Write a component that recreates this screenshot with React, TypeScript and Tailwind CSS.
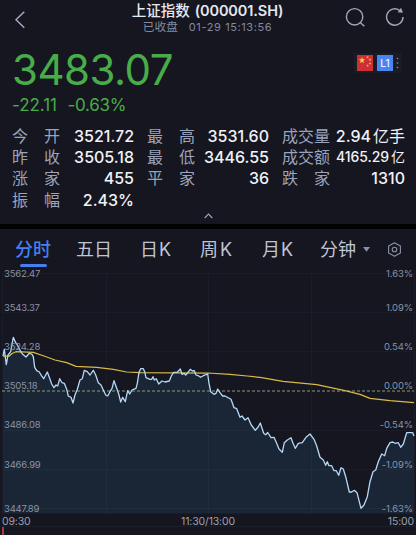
import React from "react";

type Point = [number, number];

// Intraday price, in chart coordinates (x, y from the top of the page section).
const price: Point[] = [
  [3, 356], [4.3, 349.3], [6.3, 364.7], [8, 355], [10.7, 351.7], [13.3, 337.3], [15.7, 342.7], [18, 346],
  [20.7, 351.7], [22.7, 354.3], [26, 357], [29.3, 353.3], [31.7, 354], [33.3, 356.7], [34.7, 367.3],
  [36.7, 370.7], [39.3, 372], [41.3, 375.3], [43.7, 378.7], [47.3, 372], [49.3, 377.3], [51.7, 384],
  [54, 387.7], [56, 385], [57.7, 386], [59.7, 378.7], [62, 382.7], [64.3, 383.3], [66.7, 389.3],
  [68.3, 396], [71, 397.3], [73, 403], [75, 395], [77.3, 389.3], [80, 380], [82.3, 378.7], [84.3, 370.3],
  [87.3, 371.7], [90, 375], [93.3, 370.3], [95.7, 375], [98.3, 382.7], [101, 385], [103.3, 390],
  [105.7, 395], [107.7, 396], [110, 391.7], [112, 388.3], [114, 380.7], [116.7, 388.3], [118.7, 394],
  [120.7, 402], [122.7, 397.3], [125.3, 401.7], [127.7, 390.7], [129.7, 394], [132, 390], [136, 388.3],
  [137.3, 383.3], [139, 372.3], [140.7, 368.7], [143.3, 368.7], [144.7, 371.7], [146, 377.7],
  [150, 379.3], [151.7, 379.3], [153, 376.7], [154.3, 380], [156.3, 378.7], [158.7, 384], [162, 381],
  [165, 382], [169.3, 381], [171.3, 376], [173.7, 372.3], [177.3, 372.3], [180.3, 369], [182, 374.3],
  [184, 373.3], [185.7, 375], [187.7, 372.7], [190.3, 369.3], [192.3, 371], [194.3, 370.7], [196, 375],
  [198.3, 375.7], [200.7, 377.3], [203.3, 375.7], [207.7, 374], [209, 383.3], [210.7, 391.7],
  [214, 394.3], [216, 393.3], [217.7, 389], [220, 392.7], [222.7, 396], [225, 396], [231, 399.3],
  [234, 407.7], [236.7, 408.7], [240, 417.3], [242, 416], [245, 420], [248, 417.7], [251.3, 425],
  [255.3, 430.3], [258, 427.3], [260.3, 423], [263.7, 433.3], [265.7, 434.7], [267.7, 432.5],
  [271, 437.7], [274, 437.3], [276.7, 443.3], [279, 449], [282.3, 452.3], [284.3, 442.7], [287.3, 440],
  [291, 437.7], [293, 443.3], [295.3, 448.3], [298.3, 443.3], [302.3, 442.7], [306, 437.3], [310, 434],
  [314, 439.3], [316.7, 446], [320, 457.3], [323.3, 460], [325.7, 465.3], [327.3, 461.7], [329, 465.7],
  [331.7, 465.7], [334, 470.7], [336.3, 470.7], [338.7, 475.3], [341, 467.7], [343.3, 469], [345.7, 476.7],
  [349.3, 492], [351.7, 492], [354.3, 490.3], [357, 492.7], [361, 508.3], [364, 505], [367.3, 496.7],
  [370, 481.7], [373, 471.7], [375.7, 470], [378.3, 461.7], [381.7, 454], [384.7, 455.7], [386.7, 448.3],
  [390, 442.7], [392.7, 442], [395, 443.3], [398.3, 442.7], [400.7, 447.3], [403.3, 444], [406.7, 432.7],
  [412.7, 432.7], [414, 436],
];

// Running average price.
const average: Point[] = [
  [3, 356], [9.3, 356], [12, 353.5], [16, 351.7], [33.3, 352.3], [44, 356], [55, 360], [66.7, 362.7], [76, 366.3],
  [96.7, 367.3], [113.3, 369.3], [126.7, 372], [140, 372.7], [208, 373], [230, 374.3], [247, 376],
  [260, 377.4], [283, 381.3], [316.7, 384.7], [345, 390.7], [360, 394.3], [370, 398.3], [390, 400.7],
  [414, 402.7],
];

const toPoints = (pts: Point[]) => pts.map((p) => p.join(",")).join(" ");

const levels = [
  { top: "top-0", price: "3562.47", pct: "1.63%" },
  { top: "top-[34px]", price: "3543.37", pct: "1.09%" },
  { top: "top-[73px]", price: "3524.28", pct: "0.54%" },
  { top: "top-[112px]", price: "3505.18", pct: "0.00%" },
  { top: "top-[151px]", price: "3486.08", pct: "-0.54%" },
  { top: "top-[191px]", price: "3466.99", pct: "-1.09%" },
  { top: "top-[235px]", price: "3447.89", pct: "-1.63%" },
];

function Stat({ label, value, unit, small }: { label: string; value: string; unit?: string; small?: boolean }) {
  return (
    <div className="flex h-[21.3px] items-center justify-between whitespace-nowrap">
      <span className="flex w-12 shrink-0 justify-between text-[16px] text-[#9ca3bb]">
        {label.split("").map((c) => (
          <span key={c}>{c}</span>
        ))}
      </span>
      <span
        className={
          small
            ? "text-[14px] font-medium tracking-[-0.05px] text-[#f1f2f6]"
            : "text-[16px] font-medium text-[#f1f2f6]"
        }
      >
        {value}
        {unit && <span className="ml-[2px] font-normal">{unit}</span>}
      </span>
    </div>
  );
}

function Header() {
  return (
    <header className="flex h-[39px] justify-between">
      <svg className="mt-[10px] ml-[14px] h-5 w-14" viewBox="0 0 56 20" fill="none" stroke="#a5adc2" strokeWidth="1.4">
        <path d="M10.3 1.7 2 9.7l8.3 8" />
      </svg>
      <div className="flex w-[180px] flex-col items-center whitespace-nowrap">
        <h1 className="mt-[1px] flex h-5 items-center gap-[5px] text-[14.5px] font-medium text-[#e6e8ef]">
          <span>上证指数</span>
          <span className="font-semibold tracking-[-0.1px]">(000001.SH)</span>
        </h1>
        <p className="flex h-[13px] items-center gap-[11px] text-[11.7px] text-[#8289a0]">
          <span>已收盘</span>
          <span className="text-[11px] tracking-[0.6px]">01-29 15:13:56</span>
        </p>
      </div>
      <div className="mt-[7px] mr-[11px] flex w-[60px] justify-between">
        <svg className="h-5 w-5" viewBox="0 0 20 20" fill="none" stroke="#a0a8bd" strokeWidth="1.4">
          <circle cx="9.6" cy="9.8" r="8.2" />
          <path d="m15.2 15.4 4.2 3.8" />
        </svg>
        <svg className="h-5 w-5" viewBox="0 0 20 20" fill="none" stroke="#a0a8bd" strokeWidth="1.4">
          <path d="M18 9.9A8.2 8.2 0 1 1 14.4 3.2" />
          <path d="M16.1.8 18 5.7l-5.4-.4z" fill="#a0a8bd" stroke="none" />
        </svg>
      </div>
    </header>
  );
}

function Star({ x, y, r }: { x: number; y: number; r: number }) {
  const pts = Array.from({ length: 10 }, (_, i) => {
    const rad = i % 2 ? r * 0.4 : r;
    const a = (Math.PI * i) / 5 - Math.PI / 2;
    return `${x + rad * Math.cos(a)},${y + rad * Math.sin(a)}`;
  }).join(" ");
  return <polygon points={pts} fill="#f7d046" />;
}

function Badges() {
  return (
    <div className="mt-[14px] mr-[14px] flex h-5 w-12 items-center bg-[#1a1c25] pl-[3px]">
      <svg className="h-4 w-4" viewBox="0 0 16 16">
        <rect width="16" height="16" fill="#cc3035" />
        <Star x={5} y={5.4} r={3.4} />
        <Star x={10.6} y={2.3} r={1.4} />
        <Star x={13} y={4.8} r={1.4} />
        <Star x={13} y={8.4} r={1.4} />
        <Star x={10.6} y={10.6} r={1.4} />
      </svg>
      <span className="ml-1 flex h-4 w-4 items-center justify-center bg-[#4a84ee] text-[10px] font-medium text-[#eef3ff]">
        L1
      </span>
      <svg className="ml-[3px] h-4 w-[3px]" viewBox="0 0 3 16" fill="#8e95a8">
        <circle cx="1.5" cy="3.5" r=".8" />
        <circle cx="1.5" cy="8" r=".8" />
        <circle cx="1.5" cy="12.5" r=".8" />
      </svg>
    </div>
  );
}

function Tabs() {
  return (
    <nav className="flex h-[39px] items-start pt-[8px] pl-[15px] text-[18px] leading-[26px] whitespace-nowrap text-[#c0c5d6]">
      <div className="flex w-[61px] flex-col font-medium text-[#4380f2]">
        <span>分时</span>
        <span className="mt-[1px] ml-[5px] h-[3px] w-[27px] rounded-full bg-[#4380f2]" />
      </div>
      <span className="w-[64px]">五日</span>
      <span className="flex w-[60px] gap-[1px]">日<span>K</span></span>
      <span className="flex w-[62px] gap-[2px]">周<span>K</span></span>
      <span className="flex w-[58px] gap-[1px]">月<span>K</span></span>
      <span className="w-[43px]">分钟</span>
      <svg className="mt-[10px] h-[5px] w-[7px]" viewBox="0 0 7 5" fill="#8b92a8">
        <path d="M0 0h7L3.5 4.8z" />
      </svg>
      <svg className="mt-[5px] ml-[17px] h-[15px] w-[15px]" viewBox="0 0 15 15" fill="none" stroke="#8b92a8" strokeWidth="1.1">
        <path d="m7.5.8 5.9 3.3v6.8l-5.9 3.3-5.9-3.3V4.1z" strokeLinejoin="round" />
        <circle cx="7.5" cy="7.5" r="2.3" />
      </svg>
    </nav>
  );
}

function Chart() {
  return (
    <div className="relative h-[246px]">
      <svg className="block h-[246px] w-[416px]" viewBox="0 268 416 246" fill="none">
        <polygon points={`3,513.5 ${toPoints(price)} 414,513.5`} fill="#1a2635" />
        <g stroke="#8fa5c4" strokeOpacity=".05">
          {[273.5, 312.5, 351.5, 430.5, 469.5, 508.5].map((y) => (
            <path key={y} d={`M3 ${y}H414`} />
          ))}
          {[2.5, 106.5, 208.5, 311.5, 414.5].map((x) => (
            <path key={x} d={`M${x} 273V514`} />
          ))}
        </g>
        <path d="M2 391H414" stroke="#8c9a7c" strokeWidth="1.2" strokeDasharray="3 2" />
        <polyline points={toPoints(average)} stroke="#d8ba48" strokeWidth="1.25" strokeLinejoin="round" />
        <polyline points={toPoints(price)} stroke="#b4d8f8" strokeWidth="1.3" strokeLinejoin="round" />
      </svg>
      {levels.map((l) => (
        <div
          key={l.price}
          className={`absolute inset-x-0 flex justify-between pr-[3px] pl-1 text-[9.5px] leading-[11px] text-[#8c93a6] ${l.top}`}
        >
          <span className="tracking-[-0.2px]">{l.price}</span>
          <span className="tracking-[-0.1px]">{l.pct}</span>
        </div>
      ))}
    </div>
  );
}

export default function App() {
  return (
    <main className="h-[535px] w-[416px] overflow-hidden bg-[#15161f] font-['Inter','Noto_Sans_CJK_SC',sans-serif]">
      <Header />
      <section className="h-[185px]">
        <div className="flex h-[86px] justify-between">
          <div className="pl-[12px] text-[#48ad49]">
            <div className="mt-[6px] h-[50px] text-[42px] leading-[50px] tracking-[-0.5px]">3483.07</div>
            <div className="flex gap-[10.5px] text-[17px] leading-5">
              <span className="tracking-[-0.05px]">-22.11</span>
              <span className="tracking-[-0.25px]">-0.63%</span>
            </div>
          </div>
          <Badges />
        </div>
        <div className="grid h-[86px] grid-cols-[122px_122px_123px] gap-x-[13px] pl-[12px]">
          <div>
            <Stat label="今开" value="3521.72" />
            <Stat label="昨收" value="3505.18" />
            <Stat label="涨家" value="455" />
            <Stat label="振幅" value="2.43%" />
          </div>
          <div>
            <Stat label="最高" value="3531.60" />
            <Stat label="最低" value="3446.55" />
            <Stat label="平家" value="36" />
          </div>
          <div>
            <Stat label="成交量" value="2.94" unit="亿手" />
            <Stat label="成交额" value="4165.29" unit="亿" small />
            <Stat label="跌家" value="1310" />
          </div>
        </div>
        <svg className="mx-auto mt-[2px] block h-[6px] w-[9px]" viewBox="0 0 9 6" fill="none" stroke="#9ca3bb" strokeWidth="1.1">
          <path d="m.7 5 3.8-4 3.8 4" />
        </svg>
      </section>
      <div className="h-[5px] bg-black" />
      <Tabs />
      <Chart />
      <div className="flex h-[13px] items-center justify-between border-b border-[#1c1f2a] pt-[4px] pr-[2px] pl-[2px] text-[10.5px] leading-[14px] tracking-[-0.15px] text-[#9aa1b4]">
        <span className="w-[60px]">09:30</span>
        <span>11:30/13:00</span>
        <span className="w-[60px] text-right">15:00</span>
      </div>
      <div className="ml-[2px] h-2 w-[2px] bg-[#a83a3c]" />
    </main>
  );
}
